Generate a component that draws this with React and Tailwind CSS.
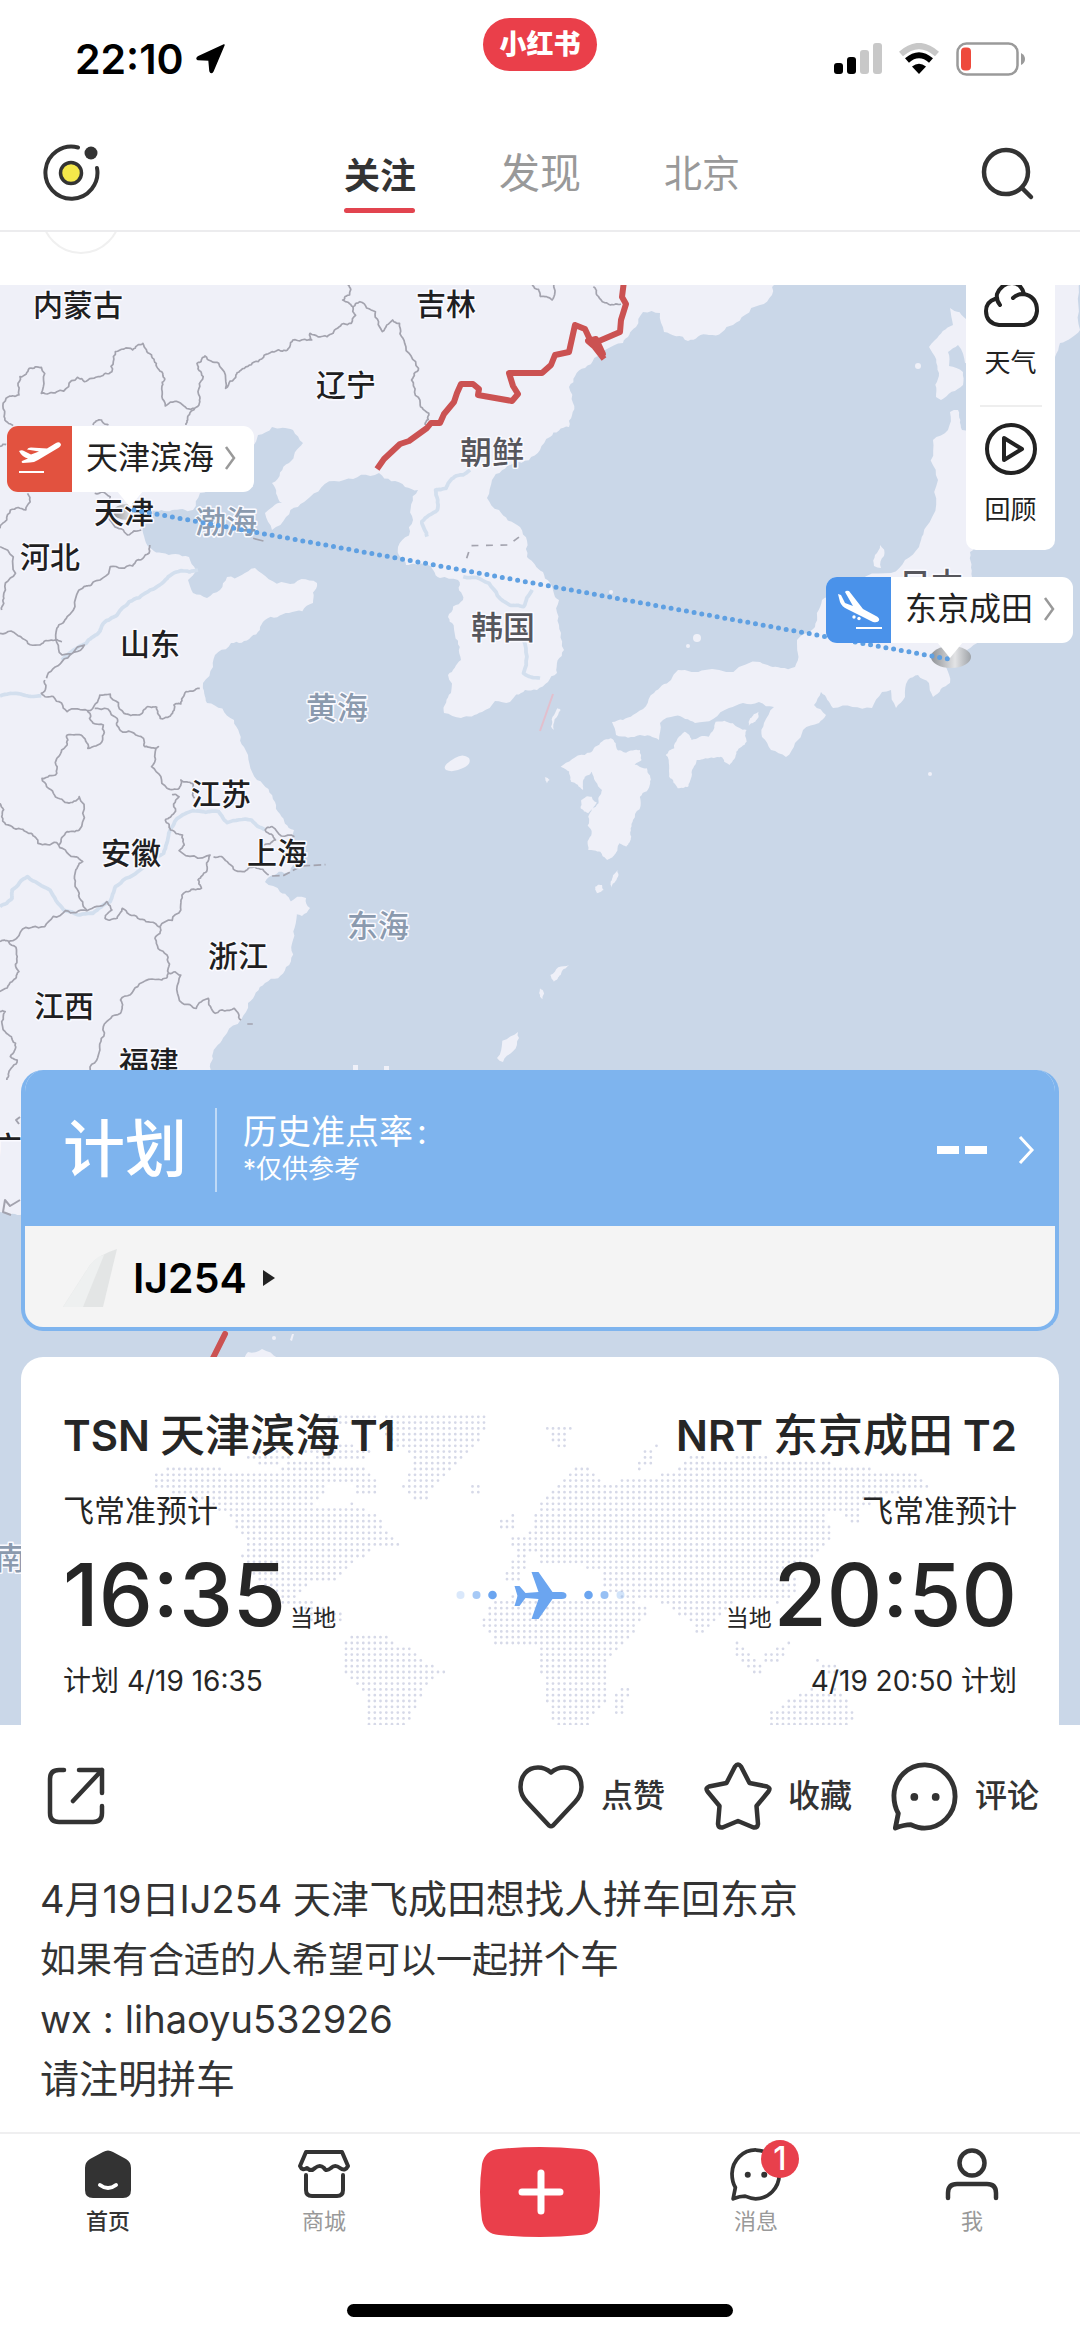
import React from "react";

const FONT = 'font-[Inter,"Noto_Sans_CJK_SC",sans-serif]';

/* ---------- geometry helpers for the map drawing ---------- */

function parse(str) {
  return str.trim().split(/\s+/).map((p) => p.split(",").map(Number));
}

// Adds small, repeatable wiggles between points so that coasts look natural.
function rough(str, amp = 0.12, closed = true, seed = 7) {
  let s = seed;
  const rnd = () => {
    s = (s * 16807) % 2147483647;
    return s / 2147483647 - 0.5;
  };
  let pts = parse(str);
  for (let k = 0; k < 3; k++) {
    const out = [];
    const n = closed ? pts.length : pts.length - 1;
    for (let i = 0; i < n; i++) {
      const a = pts[i];
      const b = pts[(i + 1) % pts.length];
      const dx = b[0] - a[0];
      const dy = b[1] - a[1];
      out.push(a);
      const len = Math.hypot(dx, dy);
      if (len > 5 && len < 110) {
        const d = rnd() * amp * 2;
        out.push([a[0] + dx / 2 - dy * d, a[1] + dy / 2 + dx * d]);
      }
    }
    if (!closed) out.push(pts[pts.length - 1]);
    pts = out;
  }
  return "M" + pts.map((p) => p[0].toFixed(1) + " " + p[1].toFixed(1)).join("L") + (closed ? "Z" : "");
}

const MAINLAND =
  "0,280 776,280 760,305 745,315 733,325 709,335 688,341 664,332 660,313 643,312 636,327 623,343 605,350 585,368 569,387 573,403 569,427 550,437 540,450 514,463 492,480 487,498 499,510 520,527 527,557 543,572 550,583 559,600 561,633 564,650 557,673 548,682 537,690 525,690 510,702 495,701 482,712 461,718 444,713 451,693 448,675 461,660 455,635 448,617 463,600 458,580 440,578 427,563 406,565 398,547 413,520 418,490 405,487 379,473 344,480 310,497 286,517 272,530 265,513 282,503 272,483 289,463 303,443 293,430 272,427 258,435 253,487 234,490 200,493 193,510 172,510 151,510 143,527 145,540 162,553 189,557 196,570 188,580 193,593 207,598 220,590 227,577 255,568 286,583 317,583 313,603 289,613 265,620 251,637 231,643 213,667 203,683 207,703 234,720 244,747 257,780 275,802 280,814 294,830 300,860 290,872 269,877 265,882 280,892 293,907 293,940 286,967 265,983 248,1003 241,1020 227,1033 213,1053 210,1075 180,1110 100,1180 20,1215 0,1212";
const HONSHU =
  "950,412 958,410 962,430 990,440 990,540 970,552 972,577 985,600 980,640 967,650 946,667 950,683 933,697 929,683 918,675 908,680 905,697 896,708 891,690 882,692 872,708 833,708 821,692 814,705 826,715 819,723 803,730 795,743 786,757 771,750 762,737 764,723 774,707 743,703 729,708 695,723 675,716 660,723 659,740 640,735 616,735 612,722 633,715 654,693 671,680 678,670 705,670 760,662 781,668 795,667 797,640 815,627 822,600 845,590 891,573 905,560 919,547 926,527 938,480 933,440 948,430";
const HOKKAIDO =
  "950,308 967,320 985,300 985,280 1080,280 1080,330 1060,343 1055,357 1030,390 990,370 965,363 958,345 948,352 949,366 963,372 963,385 941,400 936,397 939,373 929,347 935,340 953,325";

// The next shapes are traced on local grids; each grid is placed by its group.
const KYUSHU =
  "205,175 225,210 250,218 290,210 295,240 275,255 310,265 320,310 290,350 270,420 265,470 250,500 230,490 220,520 195,540 175,515 140,510 150,460 140,410 170,370 180,330 150,275 130,290 125,330 90,305 85,275 60,260 130,225 160,200";
const SHIKOKU =
  "420,155 440,180 490,170 510,125 560,130 600,150 600,185 570,215 550,255 525,230 490,235 455,240 440,290 430,320 400,325 375,290 365,225 390,205";
const SMALL_ISLES = [
  "635,95 625,125 605,140 610,115",
  "120,360 150,350 165,368 140,400 118,385",
  "225,570 222,600 208,625 205,605",
  "160,620 180,615 185,630 165,640",
  "30,885 85,855 60,885 40,905",
  "50,85 60,90 40,150 32,140",
  "0,925 12,940 8,958 0,950",
  "14,292 28,300 20,310",
];

const BORDERS_NORTH = [
  "1010,15 1015,45 995,60 1025,80 1045,65 1090,95 1110,155 1140,120 1160,130 1175,190 1215,265 1195,300 1220,370 1245,400 1235,435",
  "1025,80 1020,130 980,145 950,170 900,160 905,180 850,180 830,212 790,215 750,245 710,265 685,285 655,325 635,250 595,228 572,250 590,290 580,350 565,385 545,410 540,435",
  "565,385 525,370 480,378 470,320 478,295 455,260 440,225 415,190 385,210 335,215 325,275 290,290 245,305 225,292 165,335 120,340 120,262 85,265 58,290 55,345 25,350 12,410 38,437",
  "1545,15 1568,50",
  "80,640 75,690 30,690 0,745",
  "0,500 18,494",
  "270,435 295,420 315,435",
  "275,640 320,650 330,735 370,765 410,750",
  "435,795 415,835 385,858 320,860 265,915 240,925 195,1010 165,1045 180,1125 245,1095 180,1145 135,1195",
  "0,800 45,880 10,950 5,990",
  "0,1060 60,1070 110,1095 150,1080 180,1085",
];
const BORDERS_SOUTH = [
  "130,0 120,40 155,50 195,95 255,92 290,45 320,42 360,100 400,105 425,82 455,82 465,115 490,110 505,75 525,72 540,35 580,25",
  "275,85 340,115 350,152 410,170 420,200 460,200 440,260 485,325 520,325 525,300 560,310 565,355",
  "255,92 260,115 300,135 298,180 255,205 235,165 195,165 195,195 170,230 165,280 122,295 155,340 195,368 230,350 230,450 195,455 170,495",
  "0,370 5,410 40,445 90,460 110,490 165,488 215,530 240,545 218,580 230,640 252,690",
  "500,345 520,350 505,400 480,420 495,450 530,465 535,495 520,512 610,525 600,575 575,600 585,625 540,635 525,690 465,740",
  "620,530 660,545 705,575 740,560 780,585",
  "855,470 790,440 770,450 800,480 765,495",
  "0,785 25,785 60,755 130,740 190,692 252,692 310,665 325,690 305,715 340,715 355,685 400,715 450,730 465,740",
  "465,740 450,775 485,825 490,880",
  "25,785 50,830 55,875 35,905 0,935",
  "490,880 470,900 400,920 350,960 350,1000 300,1040 290,1110 262,1170",
  "490,880 525,885 530,970 570,985 605,955 625,1000 680,985 700,1020",
  "0,995 15,995 15,1055 45,1090 30,1130 50,1140 25,1180 20,1200",
];

const LABELS = [
  ["内蒙古", 78, 305, "a"],
  ["吉林", 446, 304, "a"],
  ["辽宁", 346, 385, "a"],
  ["天津", 124, 512, "a"],
  ["河北", 50, 557, "a"],
  ["山东", 150, 644, "a"],
  ["江苏", 221, 794, "a"],
  ["安徽", 131, 853, "a"],
  ["上海", 277, 853, "a"],
  ["浙江", 238, 956, "a"],
  ["江西", 64, 1006, "a"],
  ["福建", 149, 1062, "a"],
  ["广东", 22, 1147, "a"],
  ["朝鲜", 492, 453, "b"],
  ["韩国", 503, 628, "b"],
  ["日本", 931, 585, "b"],
  ["渤海", 226, 522, "c"],
  ["黄海", 337, 708, "c"],
  ["东海", 378, 926, "c"],
  ["南海", 26, 1558, "c"],
];
const LABEL_STYLE = {
  a: "fill-[#1f1f22] text-[30px] font-medium",
  b: "fill-[#56565c] text-[32px] font-medium",
  c: "fill-[#8b9aae] text-[31px] font-medium",
};

function MapCanvas() {
  return (
    <svg
      className="absolute inset-0 h-full w-full"
      viewBox="0 285 1080 1440"
      preserveAspectRatio="xMidYMin slice"
      role="img"
      aria-label="航线地图"
    >
      <defs>
        <linearGradient id="pin" x1="0" x2="1">
          <stop offset="0" stopColor="#8f9296" />
          <stop offset=".6" stopColor="#e3e4e6" />
          <stop offset="1" stopColor="#9fa3a8" />
        </linearGradient>
      </defs>
      <rect x="0" y="285" width="1080" height="1440" fill="#cad7e8" />
      <g fill="#eff0f8">
        <path d={rough(MAINLAND, 0.16)} />
        <path d={rough(HONSHU, 0.12, true, 11)} />
        <path d={rough(HOKKAIDO, 0.1, true, 5)} />
        <path d="M455 758q8-5 14 0q3 6-6 10q-10 5-17 2q-5-4 9-12z" />
        <path d={rough("880,545 884,556 881,568 874,566 875,555", 0.2)} />
        <circle cx="697" cy="638" r="4" />
        <circle cx="688" cy="646" r="2" />
        <circle cx="611" cy="592" r="2" />
        <circle cx="918" cy="366" r="3" />
        <circle cx="930" cy="774" r="2" />
        <path d={rough("290,902 306,898 310,908 302,916 292,910", 0.2)} />
        <path d={rough("497,1058 518,1032 519,1038 503,1062", 0.2)} />
        <path d="M353 1075v-10h5v6zM384 1075v-9h5v9z" />
        <path d={rough("245,1362 248,1352 262,1349 278,1358 280,1364", 0.15)} />
        <circle cx="274" cy="1338" r="2" />
        <path d="M290 1340l2-6h2l-2 7z" />
        <g transform="translate(540 680) scale(.3444 .3333)">
          <path d={rough(KYUSHU, 0.14, true, 3)} />
          <path d={rough(SHIKOKU, 0.14, true, 9)} />
          {SMALL_ISLES.map((d) => (
            <path key={d} d={rough(d, 0.15)} />
          ))}
        </g>
      </g>
      <g fill="none" stroke="#d3dfee" strokeWidth="4" strokeLinejoin="round">
        <g transform="translate(0 280) scale(.3444 .3333)" strokeWidth="11">
          <path d={rough("575,870 525,872 480,900 430,935 375,965 340,1005 300,1030 285,1060 250,1090 180,1140", 0.1, false)} />
          <path d={rough("1365,570 1320,590 1295,625 1265,630 1270,690 1225,725 1240,770", 0.1, false)} />
          <path d={rough("1345,890 1420,910 1480,975 1520,980 1545,930", 0.1, false)} />
          <path d={rough("1520,1080 1520,1180 1568,1195", 0.1, false)} />
        </g>
        <g transform="translate(0 680) scale(.3444 .3333)" strokeWidth="11">
          <path d={rough("0,48 60,42 120,48", 0.08, false)} />
          <path d={rough("770,450 730,420 660,428 635,395 560,392 515,415 490,460 475,520 400,575 335,620 320,665 270,700 230,705 185,690 145,630 80,590 35,630 35,655 0,680", 0.08, false)} />
        </g>
      </g>
      <g fill="none" stroke="#a3a3ae" strokeLinejoin="round" strokeWidth="5">
        <g transform="translate(0 280) scale(.3444 .3333)">
          {BORDERS_NORTH.map((d) => (
            <path key={d} d={rough(d, 0.2, false)} />
          ))}
          <path d="M735 775l30 8" />
          <path strokeDasharray="20 22" d="M1355 835l12-38 110-2 35-28" />
        </g>
        <g transform="translate(540 280) scale(.3444 .3333)">
          <path d={rough("0,50 35,60 40,15", 0.15, false)} />
          <path d={rough("155,20 165,45 205,75 235,72", 0.15, false)} />
        </g>
        <g transform="translate(0 680) scale(.3444 .3333)">
          {BORDERS_SOUTH.map((d) => (
            <path key={d} d={rough(d, 0.2, false)} />
          ))}
          <path strokeDasharray="22 10" d="M790 588l35-2 50-28 70-4M718 1032h16" />
        </g>
        <path strokeWidth="2" d="M20 1117l-4 3 3 4M20 1200l-10 6-5-6-2 12 8 3" />
      </g>
      <g fill="none" stroke="#cb5252" strokeWidth="6" strokeLinejoin="round">
        <path d="M377 469l7-10 16-15 9-3 18-13 4-5h9l4-9 10-12 3-9 4-9h12l6 5-1 6 34 6 6-7-5-8-4-13h33l9-8 4-10 14-3 6-27 10 4 7 15 28-12 1-12 5-16-4-7 2-16" />
        <path d="M588 341l15 13-7-15zM590 341l14 18" />
        <path d="M225 1334l-12 24" strokeLinecap="round" />
        <path d="M553 694l-13 37" stroke="#e2bfcd" strokeWidth="2" />
      </g>
      <ellipse cx="128" cy="512" rx="15" ry="8" fill="url(#pin)" />
      <ellipse cx="951" cy="657" rx="20" ry="11" fill="url(#pin)" />
      <g textAnchor="middle" stroke="#fafaff" strokeWidth="3" strokeLinejoin="round" paintOrder="stroke">
        {LABELS.map(([t, x, y, k]) => (
          <text key={t} x={x} y={y + 11} className={LABEL_STYLE[k]}>
            {t}
          </text>
        ))}
      </g>
      <path
        d="M134 510L948 659"
        stroke="#5fa0e2"
        strokeWidth="5"
        strokeLinecap="round"
        strokeDasharray="0 7.8"
      />
    </svg>
  );
}

/* ---------- dotted world map behind the schedule ---------- */

const CONTINENTS = [
  "218,415 225,370 245,345 300,345 330,362 400,360 420,330 470,335 500,350 540,360 552,430 510,440 520,400 480,400 455,460 490,480 510,455 550,500 560,540 585,580 540,600 515,640 490,690 450,705 430,740 470,770 495,780 492,850 440,800 400,750 370,680 350,620 355,560 330,500 280,440",
  "355,335 360,305 400,300 420,320 400,345",
  "430,300 470,270 540,300 530,340 450,320",
  "480,185 550,183 545,215 490,230 470,215",
  "560,200 590,183 710,190 695,280 670,320 640,390 612,465 585,410 600,330 560,260",
  "680,400 700,400 698,430 685,430",
  "510,848 560,848 570,880 605,900 620,940 645,965 625,1000 610,1040 600,1080 590,1130 530,1130 528,1030 498,960 500,880",
  "705,770 735,740 800,735 840,745 880,740 945,765 915,860 885,930 885,1040 850,1130 805,1130 790,1030 780,895 720,890 700,830",
  "890,1020 915,1015 905,1095 893,1095",
  "748,615 740,560 770,545 782,460 810,395 830,355 855,350 880,400 930,380 980,370 995,320 1060,325 1100,310 1130,330 1250,345 1280,370 1335,375 1352,410 1290,435 1250,480 1245,530 1215,480 1195,490 1210,560 1190,600 1150,660 1160,720 1130,760 1080,740 1050,780 1015,870 1000,810 975,780 950,750 900,745 870,700 870,660 815,640 790,650 770,600 755,700 730,690",
  "720,545 725,510 745,490 750,530",
  "790,235 830,235 815,310 800,280",
  "920,370 935,300 955,280 945,340",
  "1060,870 1075,880 1110,960 1100,975 1070,930",
  "1110,905 1150,870 1130,940 1108,940",
  "1185,930 1240,960 1235,985 1200,970",
  "1115,1130 1118,1085 1150,1040 1175,1015 1195,1030 1215,1005 1230,1060 1242,1090 1235,1130",
].map(parse);

function inside(x, y, poly) {
  let hit = false;
  for (let i = 0, j = poly.length - 1; i < poly.length; j = i++) {
    const [xi, yi] = poly[i];
    const [xj, yj] = poly[j];
    if (yi > y !== yj > y && x < ((xj - xi) * (y - yi)) / (yj - yi) + xi) hit = !hit;
  }
  return hit;
}

const DOTS = (() => {
  let d = "";
  for (let y = 1411; y < 1726; y += 5.8) {
    for (let x = 150; x < 945; x += 5.75) {
      const zx = x * 1.452;
      const zy = (y - 1350) * 3;
      if (CONTINENTS.some((c) => inside(zx, zy, c))) d += `M${x.toFixed(1)} ${y.toFixed(1)}h0`;
    }
  }
  return d;
})();

function WorldDots() {
  return (
    <svg
      className="absolute inset-0 h-full w-full"
      viewBox="21 1357 1037 368"
      preserveAspectRatio="xMidYMin meet"
      aria-hidden="true"
    >
      <path d={DOTS} stroke="#d6d9e8" strokeWidth="2.8" strokeLinecap="round" />
      <g fill="#6ba5f0">
        <circle cx="460" cy="1595" r="4" opacity=".25" />
        <circle cx="476" cy="1595" r="4" opacity=".6" />
        <circle cx="492" cy="1595" r="4.3" />
        <circle cx="588" cy="1595" r="4.3" />
        <circle cx="604" cy="1595" r="4" opacity=".7" />
        <circle cx="620" cy="1595" r="4" opacity=".3" />
        <path d="M514 1586h5l6 7 13-1-7-20h7l14 20h9q5 0 5 3.500t-5 3.500h-9l-14 20h-7l7-20-13-1-6 8h-5l3-10z" />
      </g>
    </svg>
  );
}

/* ---------- status bar and tabs ---------- */

function StatusBar() {
  return (
    <div className="grid h-[116px] grid-cols-3 px-[54px]">
      <div className="flex h-[118px] items-center gap-3 pl-[21px]">
        <span className="text-[41px] font-semibold leading-none text-black">22:10</span>
        <svg className="h-[30px] w-[30px]" viewBox="0 0 30 30" aria-hidden="true">
          <path d="M28 1L2 13q-2 1.500 0 2.500L13 16l1 11q1 3 3 0z" fill="#000" stroke="#000" strokeWidth="1.500" strokeLinejoin="round" />
        </svg>
      </div>
      <div className="flex items-start justify-center pt-[18px]">
        <span className="flex h-[53px] w-[114px] items-center justify-center rounded-full bg-[#ea3f4a] text-[27px] font-black leading-none text-white">
          小红书
        </span>
      </div>
      <div className="flex h-[118px] items-center justify-end gap-4">
        <svg className="h-[32px] w-[48px]" viewBox="0 0 48 32" aria-hidden="true">
          <rect x="0" y="20" width="9" height="11" rx="3" />
          <rect x="13" y="14" width="9" height="17" rx="3" />
          <rect x="26" y="7" width="9" height="24" rx="3" fill="#c8c8c8" />
          <rect x="39" y="0" width="9" height="31" rx="3" fill="#c8c8c8" />
        </svg>
        <svg className="h-[32px] w-[42px]" viewBox="0 0 42 32" fill="none" aria-hidden="true">
          <path d="M3 11Q21-5 39 11" stroke="#c8c8c8" strokeWidth="6" />
          <path d="M9 17.500Q21 7 33 17.500" stroke="#000" strokeWidth="6" />
          <path d="M21 31l-7-7.500q7-5.500 14 0z" fill="#000" />
        </svg>
        <svg className="h-[34px] w-[70px]" viewBox="0 0 70 34" aria-hidden="true">
          <rect x="1.500" y="1.500" width="60" height="31" rx="9" fill="none" stroke="#9a9a9a" strokeWidth="2.500" />
          <rect x="5" y="5.500" width="10" height="23" rx="4" fill="#ee4a3c" />
          <path d="M65 11q4 2 4 6t-4 6z" fill="#9a9a9a" />
        </svg>
      </div>
    </div>
  );
}

function TabBar() {
  return (
    <header className="flex h-[116px] items-center justify-between border-b-2 border-[#ececee] px-[42px]">
      <button type="button" aria-label="拍摄">
        <svg className="h-[60px] w-[60px]" viewBox="0 0 60 60" fill="none">
          <path d="M36 4.500A26 26 0 1 0 55 25" stroke="#333" strokeWidth="4" strokeLinecap="round" />
          <circle cx="29" cy="30" r="10.500" fill="#f5e84a" stroke="#333" strokeWidth="3.500" />
          <circle cx="49" cy="10" r="6.500" fill="#333" />
        </svg>
      </button>
      <nav className="flex items-center gap-[83px] pl-1 text-[#999]">
        <a href="#follow" className="flex flex-col items-center pt-[12px] text-[36px] font-bold leading-[60px] text-[#333]">
          关注
          <span className="mt-[2px] h-[5px] w-[71px] rounded-full bg-[#e2444f]" />
        </a>
        <a href="#explore" className="text-[41px] leading-[60px]">发现</a>
        <a href="#beijing" className="text-[38px] leading-[60px]">北京</a>
      </nav>
      <button type="button" aria-label="搜索">
        <svg className="h-[60px] w-[60px]" viewBox="0 0 60 60" fill="none" stroke="#333" strokeWidth="4.500" strokeLinecap="round">
          <circle cx="28" cy="29" r="22" />
          <path d="M44 45l9 9" />
        </svg>
      </button>
    </header>
  );
}

/* ---------- map overlays ---------- */

function AirportTag({ name, color, icon, place, tail }) {
  return (
    <a href="#airport" className={`absolute flex h-[66px] w-[247px] items-center rounded-[11px] bg-white ${place}`}>
      <span className={`flex h-full w-[65px] items-center justify-center rounded-l-[11px] ${color}`}>{icon}</span>
      <span className="flex flex-1 items-center justify-between pb-[2px] pl-[14px] pr-[18px] text-[32px] leading-none text-[#222]">
        {name}
        <svg className="h-[24px] w-[12px]" viewBox="0 0 12 24" fill="none" stroke="#999" strokeWidth="2.500">
          <path d="M2 1l8 11-8 11" />
        </svg>
      </span>
      <svg className={`absolute top-[65px] h-[16px] w-[26px] ${tail}`} viewBox="0 0 26 16" fill="#fff" aria-hidden="true">
        <path d="M0 0h26L13 16z" />
      </svg>
    </a>
  );
}

const takeoffIcon = (
  <svg className="h-[34px] w-[44px]" viewBox="0 0 44 34" fill="#fff" aria-hidden="true">
    <path d="M1 9q3-1.500 5 0l7 3.500 8-3L9 7.500q1-2 4-2l16 1L38 1q3-1.500 4.500.5t-1.500 4L20 18q-4 2.500-8 2.500L5 21q-2-.5-1-2l6-2.500Q4 15 1 9z" />
    <path d="M1 30h25" stroke="#fff" strokeWidth="2" />
  </svg>
);
const landingIcon = (
  <svg className="h-[42px] w-[46px]" viewBox="0 0 46 42" fill="#fff" aria-hidden="true">
    <path d="M2 5l3 1 4 8 8 3-8-14q1-2 4-1l14 18 13 7q4 2 3 4.500t-6 1.500L11 20q-5-2-7-7z" />
    <circle cx="18" cy="28" r="1.700" />
    <circle cx="23" cy="29.500" r="1.700" />
    <path d="M20 39h26" stroke="#fff" strokeWidth="2" />
  </svg>
);

function SideTools() {
  return (
    <div className="absolute right-[25px] top-0 flex w-[89px] flex-col items-center rounded-b-[10px] bg-white pb-[25px] text-[26px] leading-[30px] text-[#222]">
      <button type="button" className="flex flex-col items-center gap-[21px]">
        <svg className="h-[42px] w-[56px]" viewBox="0 0 56 42" fill="none" stroke="#222" strokeWidth="4" strokeLinecap="round">
          <path d="M17 20q-4-5-3-11Q19-2 29-2q9 0 12 11" />
          <path d="M12 14Q3 17 3 26q0 12 13 14h25q12-2 13-14 0-15-14-17-6 0-10 4" />
        </svg>
        天气
      </button>
      <span className="mt-[27px] h-[2px] w-[62px] bg-[#eee]" />
      <button type="button" className="mt-[15px] flex flex-col items-center gap-[19px]">
        <svg className="h-[54px] w-[54px]" viewBox="0 0 54 54" fill="none" stroke="#222" strokeWidth="4" strokeLinejoin="round">
          <circle cx="27" cy="27" r="24" />
          <path d="M20 16v22l18-11z" />
        </svg>
        回顾
      </button>
    </div>
  );
}

function StatusCard() {
  return (
    <section className="relative overflow-hidden rounded-[22px] border-4 border-t-0 border-[#7eb4ee] bg-[#f4f4f4]">
      <a href="#punctuality" className="flex h-[156px] items-center bg-[#7eb4ee] pl-[38px] pr-[20px] pt-[4px] text-white">
        <strong className="text-[62px] font-medium leading-none">计划</strong>
        <span className="ml-[28px] h-[84px] w-[2px] bg-white/50" />
        <span className="ml-[26px] flex flex-1 flex-col pb-[2px]">
          <span className="flex gap-1 text-[34px] leading-[40px]">历史准点率<i className="not-italic">:</i></span>
          <span className="text-[26px] leading-[34px]">*仅供参考</span>
        </span>
        <span className="flex gap-[6px]" role="img" aria-label="--">
          <i className="h-[8px] w-[22px] bg-white" />
          <i className="h-[8px] w-[22px] bg-white" />
        </span>
        <svg className="ml-[30px] h-[30px] w-[18px]" viewBox="0 0 18 30" fill="none" stroke="#fff" strokeWidth="3" aria-hidden="true">
          <path d="M3 2l12 13L3 28" />
        </svg>
      </a>
      <a href="#flight" className="flex h-[101px] items-center pl-[38px] pt-[3px] text-black">
        <svg className="h-[58px] w-[56px]" viewBox="0 0 56 58" aria-hidden="true">
          <path d="M0 58L27 16q8-10 27-16L40 58z" fill="#e3e5e5" />
          <path d="M0 58L27 16q8-10 14-10L20 58z" fill="#eef0f0" />
        </svg>
        <span className="ml-[14px] text-[41px] font-semibold leading-none">IJ254</span>
        <svg className="ml-[16px] h-[16px] w-[12px]" viewBox="0 0 12 16" fill="#222" aria-hidden="true">
          <path d="M0 0l12 8-12 8z" />
        </svg>
      </a>
    </section>
  );
}

function ScheduleCard() {
  return (
    <section className="relative overflow-hidden rounded-t-[22px] bg-white">
      <WorldDots />
      <div className="relative flex h-[368px] justify-between px-[42px] pt-[53px] text-[#262626]">
        <div className="flex flex-col items-start">
          <h2 className="flex gap-[10px] text-[42px] font-semibold leading-[52px]">
            TSN <span className="text-[45px] font-medium">天津滨海</span> T1
          </h2>
          <p className="mt-[29px] text-[31px] leading-[40px]">飞常准预计</p>
          <p className="mt-[12px] flex items-baseline gap-[4px]">
            <b className="text-[86px] font-medium leading-[104px]">16:35</b>
            <span className="text-[23px]">当地</span>
          </p>
          <p className="mt-[14px] text-[28px] leading-[40px]">计划 4/19 16:35</p>
        </div>
        <div className="flex flex-col items-end">
          <h2 className="flex gap-[10px] text-[42px] font-semibold leading-[52px]">
            NRT <span className="text-[45px] font-medium">东京成田</span> T2
          </h2>
          <p className="mt-[29px] text-[31px] leading-[40px]">飞常准预计</p>
          <p className="mt-[12px] flex items-baseline gap-[2px]">
            <span className="text-[23px]">当地</span>
            <b className="text-[86px] font-medium leading-[104px]">20:50</b>
          </p>
          <p className="mt-[14px] text-[28px] leading-[40px]">4/19 20:50 计划</p>
        </div>
      </div>
    </section>
  );
}

/* ---------- post actions, caption and bottom bar ---------- */

function Chat({ className }) {
  return (
    <svg className={className} viewBox="0 0 70 72" fill="none" stroke="#333" strokeWidth="5" strokeLinejoin="round" aria-hidden="true">
      <path d="M4.500 69l3-15Q3 46 3 35.500A31.500 32.500 0 1 1 34.500 69q-6 0-14-3.500-7 0-16 3.500z" />
      <circle cx="24" cy="37" r="4" fill="#333" stroke="none" />
      <circle cx="46" cy="37" r="4" fill="#333" stroke="none" />
    </svg>
  );
}

function Actions() {
  const item = "flex items-center gap-[16px]";
  return (
    <div className="flex h-[144px] items-center justify-between pb-[2px] pl-[46px] pr-[41px] text-[32px] font-medium leading-none text-[#333]">
      <button type="button" aria-label="分享">
        <svg className="h-[60px] w-[60px]" viewBox="0 0 60 60" fill="none" stroke="#333" strokeWidth="4.500" strokeLinecap="round" strokeLinejoin="round">
          <path d="M18 4h-5Q4 4 4 13v34q0 9 9 9h34q9 0 9-9V40" />
          <path d="M33 4h23v23M56 4L27 35" />
        </svg>
      </button>
      <div className="flex items-center gap-[39px]">
        <button type="button" className={item}>
          <svg className="h-[68px] w-[68px]" viewBox="0 0 68 68" fill="none" stroke="#333" strokeWidth="4.500" strokeLinejoin="round" aria-hidden="true">
            <path d="M34 10.500Q28 5.500 21 5.500C10 5.500 3.500 14 3.500 25q0 8 6.500 15l22 23.500q2 1.500 4 0l22-23.500q6.500-7 6.500-15C64.500 14 58 5.500 47 5.500q-7 0-13 5z" />
          </svg>
          点赞
        </button>
        <button type="button" className={item}>
          <svg className="h-[68px] w-[68px]" viewBox="0 0 68 68" fill="none" stroke="#333" strokeWidth="4.500" strokeLinejoin="round" aria-hidden="true">
            <path d="M31 4.500q3-4 6 0l8.500 16.500 17.500 3.500q4 1.500 1.500 5L52.500 44l1.500 18q-.5 4-4.500 3.500L34 59l-15.500 6.500Q14.500 66 14 62l1.500-18L3.500 29.500q-2.500-3.500 1.500-5L22.500 21z" />
          </svg>
          收藏
        </button>
        <button type="button" className={item}>
          <Chat className="h-[70px] w-[68px]" />
          评论
        </button>
      </div>
    </div>
  );
}

function Caption() {
  return (
    <article className="px-[40px] pb-[23px] text-[38px] leading-[60px] text-[#333]">
      <p className="h-[60px]">
        4月19日IJ254 天津<span className="text-[39px]">飞成田想找人拼车回东京</span>
      </p>
      <p className="h-[60px] text-[36px]">
        如果有合适的人希望可以一起拼个<span className="text-[39px]">车</span>
      </p>
      <p className="h-[60px]">
        wx<span className="px-[11px]">:</span>lihaoyu532926
      </p>
      <p className="h-[60px] text-[39px]">请注明拼车</p>
    </article>
  );
}

function BottomNav() {
  const item = "flex w-full flex-col items-center gap-[8px] text-[22px] leading-[24px]";
  return (
    <footer className="border-t-2 border-[#efeff0]">
      <nav className="grid grid-cols-5 pt-[13px] text-[#999]">
        <a href="#home" className={`${item} font-medium text-[#333]`}>
          <svg className="h-[54px] w-[54px]" viewBox="0 0 54 54" aria-hidden="true">
            <path d="M22 5q5-3 10 0l13 7q5 3 5 9v22q0 8-8 8H12q-8 0-8-8V21q0-6 5-9z" fill="#333" />
            <path d="M19 38q8 6 16 0" fill="none" stroke="#fff" strokeWidth="4" strokeLinecap="round" />
          </svg>
          首页
        </a>
        <a href="#mall" className={item}>
          <svg className="h-[54px] w-[54px]" viewBox="0 0 54 54" fill="none" stroke="#333" strokeWidth="4" strokeLinecap="round" strokeLinejoin="round" aria-hidden="true">
            <path d="M9 5h36l6 14q-3 6-8 2-5-4-9 0-5 4-7 0-4-4-9 0-4 4-8 0-5 3-7-2z" />
            <path d="M9 28v15q0 6 6 6h25q6 0 6-6V28" />
          </svg>
          商城
        </a>
        <button type="button" aria-label="发布" className="flex justify-center">
          <svg className="h-[90px] w-[120px]" viewBox="0 0 120 90" aria-hidden="true">
            <path d="M19 2Q60-2 101 2q14 1 17 15 4 28 0 56-3 14-17 15-41 4-82 0Q5 87 2 73q-4-28 0-56Q5 3 19 2z" fill="#ea3f4b" />
            <path d="M61 26v38M42 45h38" stroke="#fff" strokeWidth="7" strokeLinecap="round" />
          </svg>
        </button>
        <a href="#messages" className={item}>
          <span className="relative">
            <Chat className="h-[54px] w-[54px]" />
            <span className="absolute -right-[16px] -top-[7px] flex h-[38px] w-[38px] items-center justify-center rounded-full bg-[#e8404c] text-[32px] font-medium leading-none text-white">
              1
            </span>
          </span>
          消息
        </a>
        <a href="#me" className={item}>
          <svg className="h-[54px] w-[54px]" viewBox="0 0 54 54" fill="none" stroke="#333" strokeWidth="4.500" strokeLinecap="round" aria-hidden="true">
            <circle cx="27" cy="16" r="12.500" />
            <path d="M3 51v-5q0-9 9-9h30q9 0 9 9v5" />
          </svg>
          我
        </a>
      </nav>
      <div className="flex justify-center pb-[21px] pt-[67px]">
        <span className="h-[13px] w-[386px] rounded-full bg-black" />
      </div>
    </footer>
  );
}

export default function App() {
  return (
    <main className={`min-h-screen w-full overflow-hidden bg-white ${FONT}`}>
      <StatusBar />
      <TabBar />
      <div className="h-[53px] overflow-hidden pl-[41px]">
        <div className="-mt-[58px] h-[80px] w-[80px] rounded-full border-2 border-[#f0f0f0]" />
      </div>
      <section className="relative overflow-hidden bg-[#cad7e8] px-[21px] pt-[785px]">
        <MapCanvas />
        <AirportTag name="天津滨海" color="bg-[#e2523f]" icon={takeoffIcon} place="left-[7px] top-[141px]" tail="left-[110px]" />
        <AirportTag name="东京成田" color="bg-[#4a92ea]" icon={landingIcon} place="right-[7px] top-[292px]" tail="left-[111px]" />
        <SideTools />
        <div className="flex flex-col gap-[26px]">
          <StatusCard />
          <ScheduleCard />
        </div>
      </section>
      <Actions />
      <Caption />
      <BottomNav />
    </main>
  );
}
